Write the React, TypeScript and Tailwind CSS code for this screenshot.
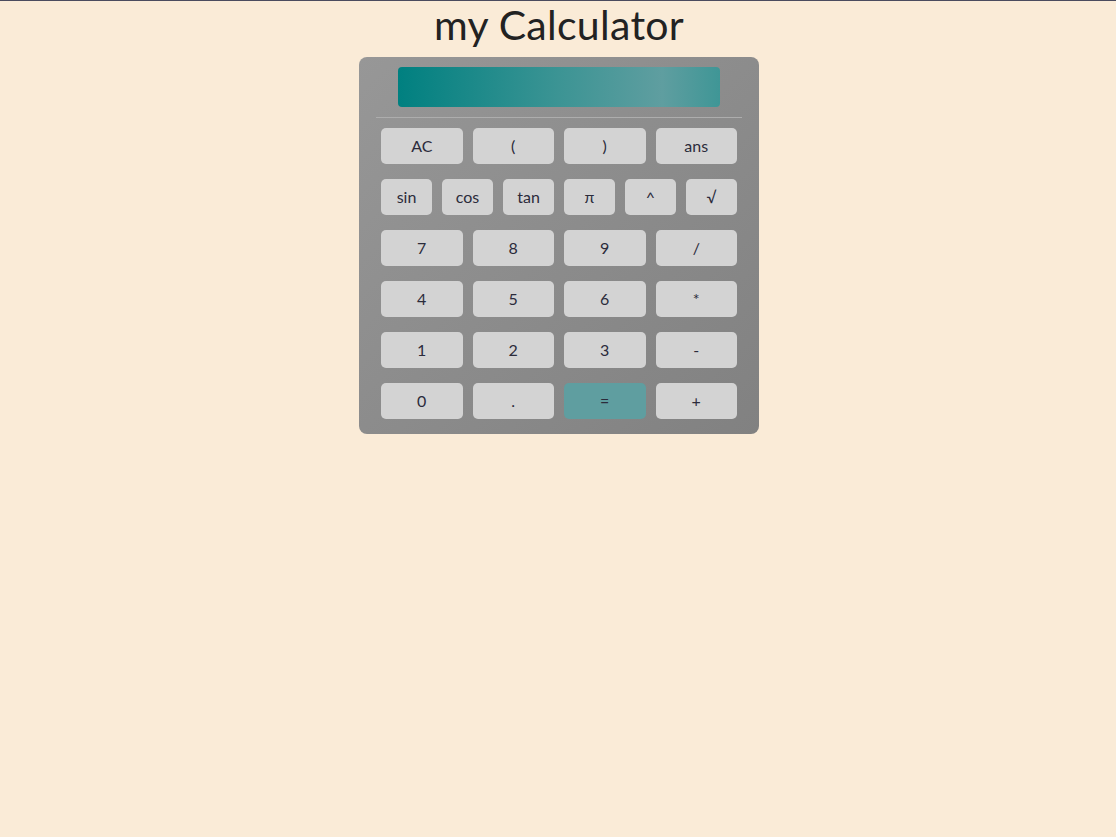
export default function App() {
  const top = ['AC', '(', ')', 'ans']
  const sci = ['sin', 'cos', 'tan', 'π', '^', '√']
  const rows = [
    ['7', '8', '9', '/'],
    ['4', '5', '6', '*'],
    ['1', '2', '3', '-'],
    ['0', '.', '=', '+'],
  ]
  const btn = 'h-9 rounded-[5px] bg-[#d3d3d3] text-[16px] text-[#2b2b3b] flex items-center justify-center'

  return (
    <div className="min-h-[837px] bg-[#faebd7] border-t border-[#4b4b5e] pl-[2px] font-['Lato','Open_Sans',sans-serif]">
      <h1 className="text-center text-[41px] leading-[48px] tracking-[0.3px] text-[#222]">my Calculator</h1>
      <div className="mx-auto mt-[8px] w-[400px] rounded-[8px] bg-gradient-to-br from-[#979797] to-[#818181] pt-[10px] pb-[15px]">
        <div className="mx-auto w-[322px] h-10 rounded-[4px] bg-[linear-gradient(90deg,#008080_0%,#3c9494_50%,#5f9ea0_82%,#3f9696_100%)]" />
        <div className="mx-[17px] mt-[10px] h-px bg-[#adadad]" />
        <div className="px-[22px] mt-[10px] flex flex-col gap-[15px]">
          <div className="grid grid-cols-4 gap-[10px]">
            {top.map(t => <div key={t} className={btn}>{t}</div>)}
          </div>
          <div className="grid grid-cols-6 gap-[10px]">
            {sci.map(t => <div key={t} className={btn}>{t}</div>)}
          </div>
          {rows.map((r, i) => (
            <div key={i} className="grid grid-cols-4 gap-[10px]">
              {r.map(t => (
                <div key={t} className={t === '=' ? 'h-9 rounded-[5px] bg-[#5f9ea0] text-[16px] text-[#2b2b3b] flex items-center justify-center' : btn}>{t}</div>
              ))}
            </div>
          ))}
        </div>
      </div>
    </div>
  )
}
